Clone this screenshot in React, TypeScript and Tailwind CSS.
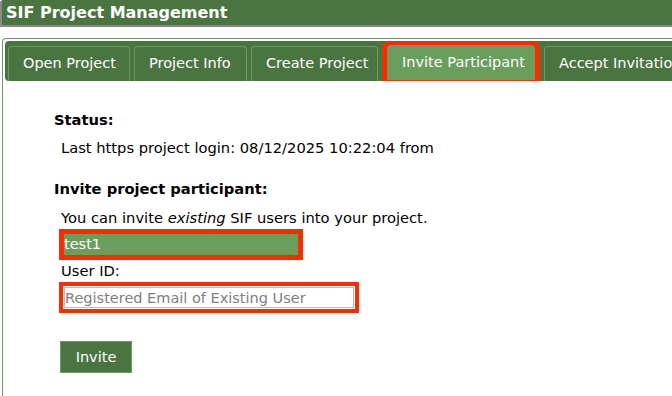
import React from 'react';

const tabs = [
  { label: 'Open Project', w: 'w-[122px]' },
  { label: 'Project Info', w: 'w-[113px]' },
  { label: 'Create Project', w: 'w-[127px]' },
  { label: 'Invite Participant', w: 'w-[148px]' },
  { label: 'Accept Invitation', w: 'w-[150px]' },
];

export default function App() {
  return (
    <div className="h-[396px] w-[672px] overflow-hidden bg-white font-['DejaVu_Sans',Verdana,sans-serif] text-black">
      {/* title bar */}
      <div className="flex h-[27px] items-center rounded-tl-[3px] border-b-2 border-l-2 border-[#8a8a8a] bg-[#4a7540] pl-[4px] text-[16px] font-bold text-white">
        SIF Project Management
      </div>

      {/* panel */}
      <div className="ml-[2px] mt-[11px] h-[400px] rounded-tl-[4px] border border-r-0 border-[#6a9e5c] p-[2px] pr-0">
        <div className="flex h-[40px] items-end gap-[4px] overflow-hidden rounded-l-[4px] bg-[#4a7540] pl-[3px]">
          {tabs.map((t) => {
            const active = t.label === 'Invite Participant';
            return (
              <div
                key={t.label}
                className={`flex h-[35px] shrink-0 items-center whitespace-nowrap rounded-t-[4px] border border-b-0 pl-[14px] text-[14.5px] text-white ${t.w} ${
                  active
                    ? 'mx-[5px] mb-[1px] h-[34px] border-[#6a9e5c] bg-[#6a9e5c] ring-[5px] ring-[#ff2a00]'
                    : 'border-[#6a9e5c] bg-[#4a7540]'
                }`}
              >
                {t.label}
              </div>
            );
          })}
        </div>

        <div className="pl-[49px] text-[14.7px] leading-[18px]">
          <div className="mt-[30px] font-bold">Status:</div>
          <div className="mt-[10px] pl-[7px]">Last https project login: 08/12/2025 10:22:04 from</div>

          <div className="mt-[23px] font-bold">Invite project participant:</div>
          <div className="mt-[11px] pl-[7px]">
            You can invite <i>existing</i> SIF users into your project.
          </div>

          <div className="ml-[5px] mt-[2px] w-[244px] border-[5px] border-[#ff2a00]">
            <div className="h-[21px] bg-[#6a9e5c] text-[14.5px] leading-[21px] text-white">test1</div>
          </div>
          <div className="mt-[2px] pl-[7px]">User ID:</div>
          <div className="ml-[5px] mt-[2px] w-[300px] border-[4px] border-[#ff2a00] p-[1px]">
            <input
              className="block h-[21px] w-full border border-[#bbbbbb] bg-white px-0 text-[14.5px] text-black outline-none placeholder:text-[#808080]"
              placeholder="Registered Email of Existing User"
            />
          </div>

          <button className="ml-[6px] mt-[28px] block h-[32px] w-[72px] border border-[#6a9e5c] bg-[#4a7540] text-[14.5px] text-white">
            Invite
          </button>
        </div>
      </div>
    </div>
  );
}
